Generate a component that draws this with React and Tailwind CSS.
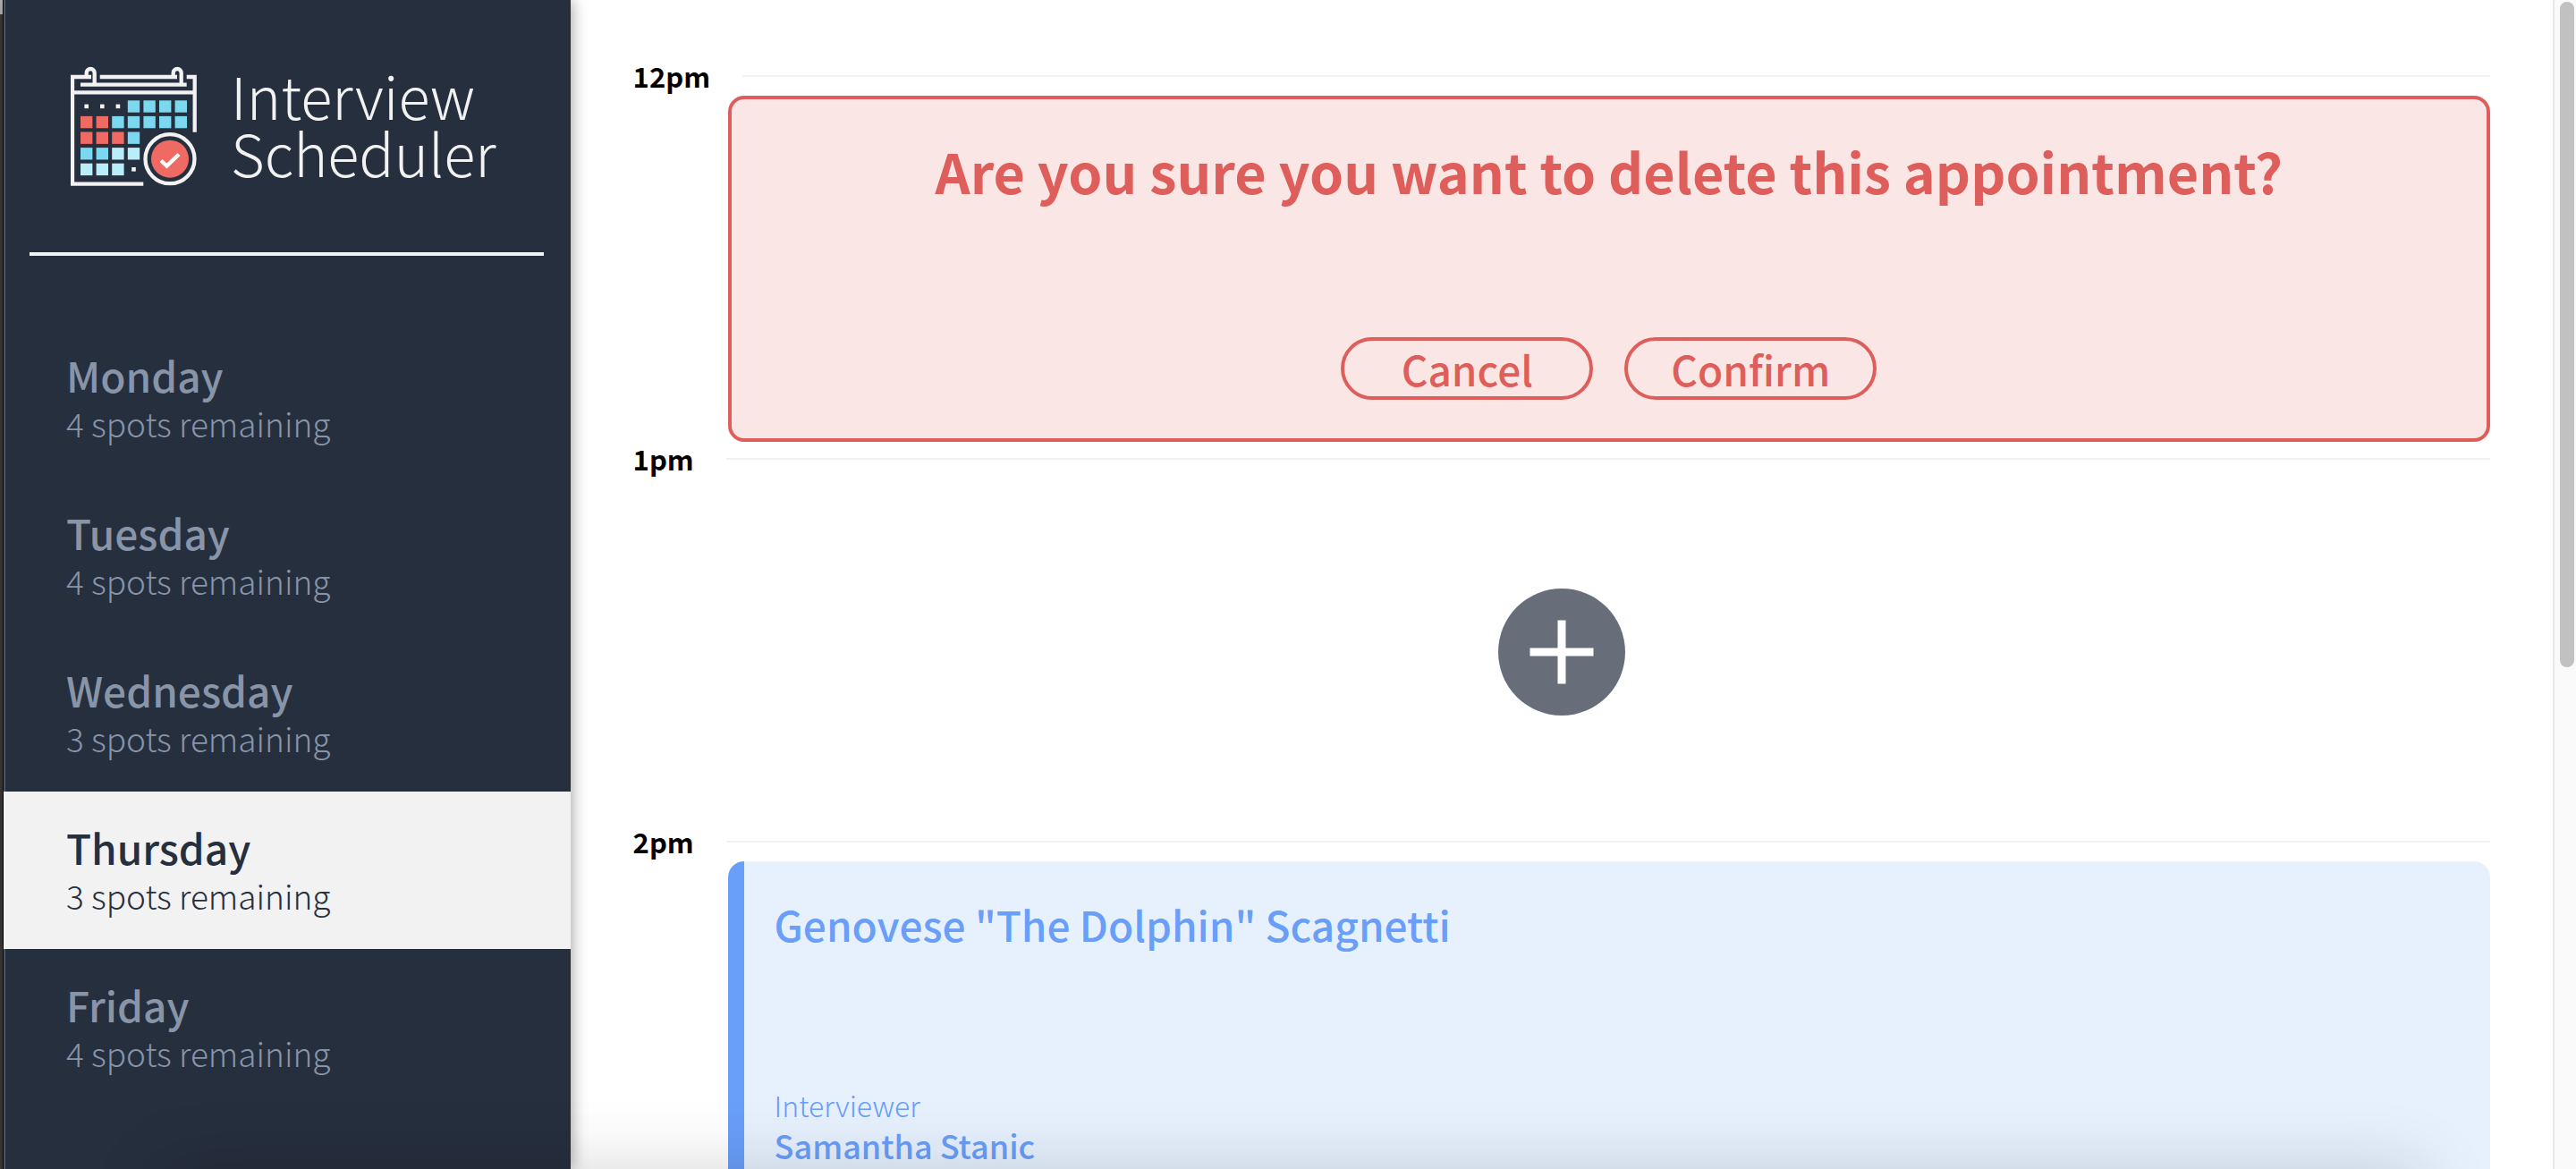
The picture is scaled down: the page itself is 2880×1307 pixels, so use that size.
const days = [
  { name: "Monday", spots: 4 },
  { name: "Tuesday", spots: 4 },
  { name: "Wednesday", spots: 3 },
  { name: "Thursday", spots: 3, selected: true },
  { name: "Friday", spots: 4 },
];

const BLUE = "#7bd8ef";
const RED = "#ee6a62";
const PALE = "#b9eef8";
const grid = [
  [null, null, null, BLUE, BLUE, BLUE, BLUE],
  [RED, RED, BLUE, BLUE, BLUE, BLUE, BLUE],
  [RED, RED, RED, BLUE],
  [BLUE, BLUE, PALE, PALE],
  [PALE, PALE, PALE, null],
];

function CalendarLogo() {
  return (
    <svg className="h-[134px] w-[141px] shrink-0" viewBox="0 0 141 134" fill="none" aria-hidden="true">
      <g stroke="#f2f2f2" strokeWidth="4.300">
        <path d="M23 12H2V131.700H81.300" />
        <path d="M32.700 12H119" />
        <path d="M129.700 12H138.700V73.700" />
        <path d="M2 29.300H138.700" />
        <path d="M11 20.700H129.700" />
        <path d="M17.700 13V7.500a4.500 4.500 0 0 1 9 0V20" />
        <path d="M114.700 13V7.500a4.500 4.500 0 0 1 9 0V20" />
        <circle cx="111" cy="103.700" r="27.500" />
      </g>
      {grid.map((row, r) =>
        row.map((fill, c) =>
          fill ? (
            <rect key={`${r}-${c}`} x={11 + c * 17.6} y={38.3 + r * 17.6} width="13.4" height="13.4" fill={fill} />
          ) : (
            <rect key={`${r}-${c}`} x={15.4 + c * 17.6} y={42.6 + r * 17.6} width="4.600" height="4.600" fill="#f2f2f2" />
          )
        )
      )}
      <circle cx="111" cy="103.700" r="21" fill={RED} />
      <path d="M101 105.500l6.500 6L121 98.500" stroke="#fff" strokeWidth="4.400" />
    </svg>
  );
}

function Sidebar() {
  return (
    <aside className="z-10 flex w-[22%] shrink-0 flex-col border-l-2 border-[#4b5561] bg-[#262f3e] pt-[74px] shadow-[2px_0_16px_rgba(0,0,0,0.35)]">
      <div className="flex gap-[38px] pl-[73px]">
        <CalendarLogo />
        <h1 className="text-[65px] leading-[64px] font-light text-[#f2f2f2]">
          Interview
          <br />
          Scheduler
        </h1>
      </div>
      <hr className="mr-[30px] ml-[27px] mt-[74px] mb-[71px] border-0 border-t-4 border-[#f2f2f2]" />
      <nav>
        <ul>
          {days.map((day) => (
            <li key={day.name}>
              <button
                type="button"
                aria-pressed={Boolean(day.selected)}
                className={
                  day.selected
                    ? "block w-full bg-[#f2f2f2] py-[34px] pl-[68px] text-left text-[#262f3e] shadow-[-2px_0_0_#f2f2f2]"
                    : "block w-full py-[34px] pl-[68px] text-left text-[#8894a8]"
                }
              >
                <span className="block text-[46px] leading-[56px] font-medium">{day.name}</span>
                <span className="block text-[37px] leading-[52px] font-light">{day.spots} spots remaining</span>
              </button>
            </li>
          ))}
        </ul>
      </nav>
    </aside>
  );
}

function Slot({ time, children }) {
  return (
    <article>
      <header className="mb-[3px] flex h-[38px] items-center gap-9">
        <h4 className="text-[31px] leading-[38px] font-bold text-black">{time}</h4>
        <hr className="grow border-0 border-t-2 border-[#f2f2f2]" />
      </header>
      {children}
    </article>
  );
}

function PillButton({ children }) {
  return (
    <button
      type="button"
      className="h-[70px] w-[282px] rounded-full border-4 border-[#de5e5b] text-[46px] leading-[62px] font-medium text-[#de5e5b]"
    >
      {children}
    </button>
  );
}

export default function App() {
  return (
    <div className='relative flex h-screen overflow-hidden bg-white font-["Noto_Sans_CJK_SC","Noto_Sans",sans-serif]'>
      <div className="w-1 shrink-0 border-r border-black bg-[#3b3a38]">
        <div className="h-4 bg-[#b5b5b5]" />
      </div>
      <Sidebar />
      <main className="min-w-0 grow px-[70px] pt-[66px]">
        <Slot time="12pm">
          <section className="ml-[106px] flex h-[387px] flex-col items-center justify-between rounded-[18px] border-4 border-[#de5e5b] bg-[#fae7e5] pt-10 pb-[43px]">
            <h2 className="text-[61px] leading-[80px] font-bold text-[#de5e5b]">
              Are you sure you want to delete this appointment?
            </h2>
            <div className="flex gap-[35px]">
              <PillButton>Cancel</PillButton>
              <PillButton>Confirm</PillButton>
            </div>
          </section>
        </Slot>
        <Slot time="1pm">
          <div className="flex h-[387px] items-center justify-center">
            <button type="button" aria-label="Add appointment" className="rounded-full">
              <svg className="size-[142px]" viewBox="0 0 142 142" aria-hidden="true">
                <circle cx="71" cy="71" r="71" fill="#686e79" />
                <path d="M71 35.500V106.500M35.500 71H106.500" stroke="#fff" strokeWidth="9" />
              </svg>
            </button>
          </div>
        </Slot>
        <Slot time="2pm">
          <section className="ml-[106px] flex h-[387px] flex-col justify-between rounded-[18px] border-l-[18px] border-[#699ef9] bg-[#e7f1fe] pt-10 pb-[47px] pl-[34px] text-[#699ef9]">
            <h2 className="text-[46px] leading-[60px] font-medium">Genovese "The Dolphin" Scagnetti</h2>
            <div>
              <h4 className="text-[32px] leading-[44px] font-light">Interviewer</h4>
              <h3 className="text-[36px] leading-[46px] font-medium">Samantha Stanic</h3>
            </div>
          </section>
        </Slot>
      </main>
      <div className="w-[26px] shrink-0 border-l-2 border-[#e8e8e8] bg-[#fafafa] pt-0.5 pl-1.5">
        <div className="h-[57%] w-4 rounded-full bg-[#c1c1c1]" />
      </div>
      <div className="pointer-events-none absolute top-full right-[170px] left-[180px] z-20 h-40 shadow-[0_0_80px_rgba(0,0,0,0.16)]" />
    </div>
  );
}
